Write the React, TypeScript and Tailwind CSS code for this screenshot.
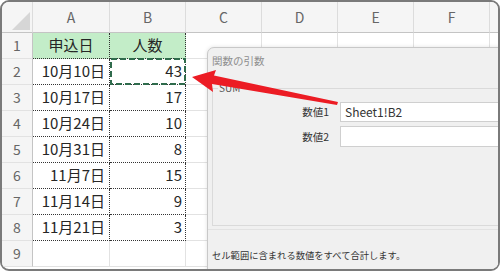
import React from "react";

const rows: { a: string; b: string }[] = [
  { a: "10月10日", b: "43" },
  { a: "10月17日", b: "17" },
  { a: "10月24日", b: "10" },
  { a: "10月31日", b: "8" },
  { a: "11月7日", b: "15" },
  { a: "11月14日", b: "9" },
  { a: "11月21日", b: "3" },
];

const cols = ["A", "B", "C", "D", "E", "F", ""];
const font = { fontFamily: '"Noto Sans CJK JP", "Noto Sans", sans-serif' };

function HeaderCell({ label }: { label: string }) {
  return (
    <div className="flex items-center justify-center border-r border-b border-r-[#dcdcdc] border-b-[#c4c4c4] bg-[#f5f5f5] text-[14px] text-[#666]">
      {label}
    </div>
  );
}

function RowHead({ n }: { n: number }) {
  return (
    <div className="flex items-center justify-center border-r border-b border-r-[#c4c4c4] border-b-[#e2e2e2] bg-[#f5f5f5] text-[14px] text-[#666]">
      {n}
    </div>
  );
}

function Plain() {
  return <div className="border-r border-b border-[#e2e2e2] bg-white" />;
}

export default function App() {
  return (
    <div className="bg-white w-[500px] h-[271px]" style={font}>
      <div className="relative w-[500px] h-[271px] overflow-hidden rounded-[9px] border-2 border-[#7a7a7a] bg-white">
        <div className="grid grid-cols-[31px_77px_76px_76px_76px_76px_76px_76px] grid-rows-[31px_repeat(9,26px)]">
          {/* header row */}
          <div className="relative border-r border-b border-r-[#dcdcdc] border-b-[#c4c4c4] bg-[#f5f5f5]">
            <svg className="absolute left-[10px] top-[10px]" width="18" height="18" viewBox="0 0 18 18">
              <polygon points="18,0 18,18 0,18" fill="#d6d6d6" />
            </svg>
          </div>
          {cols.map((c, i) => (
            <HeaderCell key={i} label={c} />
          ))}

          {/* row 1 */}
          <RowHead n={1} />
          <div className="flex items-center justify-center border-r border-b border-dotted border-[#333] bg-[#c3edc8] text-[15px] text-[#262626]">
            申込日
          </div>
          <div className="flex items-center justify-center border-r border-b border-dotted border-[#333] bg-[#c3edc8] text-[15px] text-[#262626]">
            人数
          </div>
          <Plain />
          <Plain />
          <Plain />
          <Plain />
          <Plain />

          {rows.map((r, i) => (
            <React.Fragment key={i}>
              <RowHead n={i + 2} />
              <div className="flex items-center justify-end pr-[4px] border-r border-b border-dotted border-[#333] bg-white text-[15px] text-[#262626]">
                {r.a}
              </div>
              <div className="relative flex items-center justify-end pr-[3px] border-r border-b border-dotted border-[#333] bg-white text-[15px] text-[#262626]">
                {r.b}
                {i === 0 && (
                  <svg className="absolute left-[0px] top-[-1px]" width="76" height="27" viewBox="0 0 76 27">
                    <rect x="1" y="1" width="74" height="25" fill="none" stroke="#2f6b4c" strokeWidth="2" strokeDasharray="6 3" />
                  </svg>
                )}
              </div>
              <Plain />
              <Plain />
              <Plain />
              <Plain />
              <Plain />
            </React.Fragment>
          ))}

          {/* row 9 */}
          <RowHead n={9} />
          <Plain />
          <Plain />
          <Plain />
          <Plain />
          <Plain />
          <Plain />
          <Plain />
        </div>

        {/* dialog */}
        <div className="absolute left-[205px] top-[45px] w-[330px] h-[240px] rounded-tl-[7px] border border-[#c8c8c8] bg-[#f0f0f0] shadow-[0_0_4px_rgba(0,0,0,0.12)]">
          <div className="flex h-[26px] items-center pl-[4px] text-[10.5px] text-[#8e8e8e]">関数の引数</div>
          <div className="relative ml-[4px] mt-[14px] h-[138px] w-[330px] border border-[#dadada]">
            <span className="absolute left-[5px] top-[-8px] bg-[#f0f0f0] px-[1px] text-[10px] leading-[14px] text-[#555]">SUM</span>
            <div className="flex flex-col gap-[4px] pt-[13px]">
              <div className="flex items-center">
                <div className="w-[117px] pr-[1px] text-right text-[10.5px] text-[#333]">数値1</div>
                <div className="ml-[10px] flex h-[20px] w-[200px] items-center border border-[#cfcfcf] bg-white pl-[4px] text-[12px] text-[#333]">
                  Sheet1!B2
                </div>
              </div>
              <div className="flex items-center">
                <div className="w-[117px] pr-[1px] text-right text-[10.5px] text-[#333]">数値2</div>
                <div className="ml-[10px] h-[21px] w-[200px] border border-[#cfcfcf] bg-white" />
              </div>
            </div>
          </div>
          <div className="mt-[3px] border-t border-[#e2e2e2]" />
          <div className="mt-[18px] pl-[4px] text-[9.3px] leading-[14px] text-[#333]">
            セル範囲に含まれる数値をすべて合計します。
          </div>
        </div>

        {/* arrow */}
        <svg className="absolute left-0 top-0" width="500" height="271" viewBox="0 0 500 271">
          <polygon
            points="190,75 214,68 212,73.5 336,100 335,103 210,82 211,90"
            fill="#ec1c24"
          />
        </svg>
      </div>
    </div>
  );
}
